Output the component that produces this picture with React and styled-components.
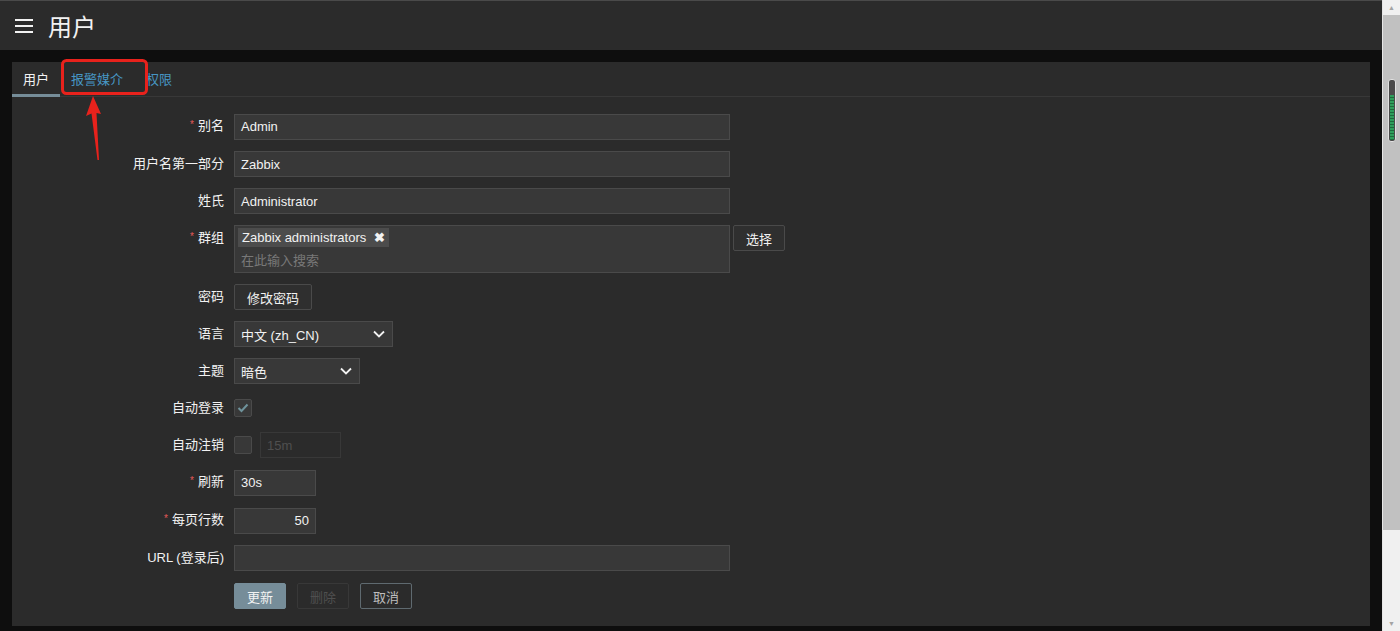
import styled, { createGlobalStyle } from "styled-components";

const GlobalStyle = createGlobalStyle`
    html, body {
        margin: 0;
        padding: 0;
        background: #0e0e0e;
        overflow: hidden;
    }
    body {
        font-family: "Liberation Sans", "Noto Sans CJK SC", sans-serif;
        font-size: 13px;
        color: #f2f2f2;
    }
`;

const Page = styled.div`
    display: flex;
    width: 1400px;
    height: 631px;
    position: relative;
`;

const Main = styled.div`
    flex: 1;
    display: flex;
    flex-direction: column;
    background: #0e0e0e;
`;

const Header = styled.header`
    height: 50px;
    box-sizing: border-box;
    border-top: 1px solid #4a4a4a;
    background: #2b2b2b;
    display: flex;
    align-items: center;
    gap: 15px;
    padding-left: 15px;
`;

const Burger = styled.div`
    display: flex;
    flex-direction: column;
    gap: 4px;
    span {
        display: block;
        width: 18px;
        height: 2px;
        background: #f2f2f2;
    }
`;

const Title = styled.h1`
    margin: 0;
    font-size: 24px;
    font-weight: normal;
    color: #f2f2f2;
    font-family: "Noto Sans CJK SC", sans-serif;
`;

const Panel = styled.section`
    flex: 1;
    margin: 12px 12px 5px 12px;
    background: #2b2b2b;
    display: flex;
    flex-direction: column;
`;

const TabBar = styled.nav`
    display: flex;
    height: 34px;
    border-bottom: 1px solid #383838;
`;

const Tab = styled.div`
    display: flex;
    align-items: center;
    padding: 0 11px;
    margin-right: ${(p) => p.$gap || 0}px;
    color: ${(p) => (p.$active ? "#f2f2f2" : "#4796c4")};
    border-bottom: 3px solid ${(p) => (p.$active ? "#768d99" : "transparent")};
    margin-bottom: -1px;
`;

const Form = styled.div`
    display: grid;
    grid-template-columns: 212px 1fr;
    column-gap: 10px;
    row-gap: 11px;
    padding-top: 16px;
`;

const Label = styled.label`
    align-self: start;
    line-height: 26px;
    text-align: right;
    white-space: nowrap;
`;

const Req = styled.span`
    color: #e45959;
    font-size: 10px;
    position: relative;
    top: -2px;
    margin-right: 4px;
`;

const Field = styled.div`
    display: flex;
    align-items: ${(p) => (p.$top ? "flex-start" : "center")};
    gap: ${(p) => p.$gap || 0}px;
    min-height: 26px;
`;

const TextBox = styled.div`
    box-sizing: border-box;
    width: ${(p) => p.$w}px;
    height: 26px;
    padding: 0 6px;
    display: flex;
    align-items: center;
    justify-content: ${(p) => (p.$right ? "flex-end" : "flex-start")};
    background: ${(p) => (p.$disabled ? "transparent" : "#383838")};
    border: 1px solid ${(p) => (p.$disabled ? "#383838" : "#4a4a4a")};
    color: ${(p) => (p.$disabled ? "#4f4f4f" : "#f2f2f2")};
`;

const Multi = styled.div`
    box-sizing: border-box;
    width: 496px;
    height: 48px;
    background: #383838;
    border: 1px solid #4a4a4a;
    padding: 2px 3px;
    display: flex;
    flex-direction: column;
    align-items: flex-start;
    gap: 3px;
`;

const Chip = styled.span`
    display: inline-flex;
    align-items: center;
    gap: 8px;
    height: 19px;
    padding: 0 4px;
    background: #4c4c4c;
    color: #f2f2f2;
    b {
        font-size: 13px;
    }
`;

const Placeholder = styled.span`
    color: #787878;
    padding-left: 3px;
    font-family: "Noto Sans CJK SC", sans-serif;
    font-size: 13px;
`;

const Button = styled.button`
    box-sizing: border-box;
    height: 26px;
    padding: 0 ${(p) => p.$pad || 12}px;
    font-family: inherit;
    font-size: 13px;
    border-radius: 2px;
    cursor: pointer;
    ${(p) =>
        p.$variant === "main"
            ? `background:#768d99;border:1px solid #768d99;color:#f2f2f2;`
            : p.$variant === "disabled"
            ? `background:transparent;border:1px solid #383838;color:#4f4f4f;`
            : p.$variant === "alt"
            ? `background:transparent;border:1px solid #5f6a70;color:#bdbdbd;`
            : `background:#2f2f2f;border:1px solid #4a4a4a;color:#f2f2f2;`}
`;

const Select = styled.div`
    box-sizing: border-box;
    width: ${(p) => p.$w}px;
    height: 26px;
    padding: 0 7px 0 6px;
    background: #383838;
    border: 1px solid #4a4a4a;
    display: flex;
    align-items: center;
    justify-content: space-between;
    color: #f2f2f2;
`;

const Check = styled.span`
    box-sizing: border-box;
    width: 18px;
    height: 18px;
    border-radius: 2px;
    background: #383838;
    border: 1px solid #4a4a4a;
    display: inline-flex;
    align-items: center;
    justify-content: center;
`;

const Actions = styled.div`
    display: flex;
    gap: 11px;
    margin-top: 1px;
`;

const Scrollbar = styled.div`
    width: 17px;
    border-left: 1px solid #e6e6e6;
    background: #f0f0f0;
    display: flex;
    flex-direction: column;
    align-items: stretch;
`;

const ScrollArrow = styled.div`
    height: 15px;
    display: flex;
    align-items: center;
    justify-content: center;
    color: #a3a3a3;
    font-size: 7px;
`;

const Thumb = styled.div`
    height: 515px;
    background: #c1c1c1;
    display: flex;
    flex-direction: column;
    align-items: center;
    padding-top: 64px;
    box-sizing: border-box;
`;

const Meter = styled.div`
    width: 8px;
    height: 63px;
    box-sizing: border-box;
    border: 1px solid #e0e0e0;
    border-radius: 3px;
    background: #4a4a4a;
    display: flex;
    flex-direction: column;
    justify-content: flex-end;
    padding: 1px;
    span {
        height: 45px;
        background: repeating-linear-gradient(
            to bottom,
            #2e9e5b 0px,
            #2e9e5b 2px,
            #1c6b3c 2px,
            #1c6b3c 3px
        );
    }
`;

const Spacer = styled.div`
    flex: 1;
`;

const Annotation = styled.svg`
    position: absolute;
    left: 0;
    top: 0;
    pointer-events: none;
`;

const Chevron = () => (
    <svg width="12" height="8" viewBox="0 0 12 8">
        <path d="M1 1.5 L6 6.5 L11 1.5" fill="none" stroke="#f2f2f2" strokeWidth="1.8" />
    </svg>
);

const Row = ({ label, required, children }) => (
    <>
        <Label>
            {required && <Req>*</Req>}
            {label}
        </Label>
        {children}
    </>
);

export default function App() {
    return (
        <>
            <GlobalStyle />
            <Page>
                <Main>
                    <Header>
                        <Burger>
                            <span />
                            <span />
                            <span />
                        </Burger>
                        <Title>用户</Title>
                    </Header>
                    <Panel>
                        <TabBar>
                            <Tab $active>用户</Tab>
                            <Tab $gap={1}>报警媒介</Tab>
                            <Tab>权限</Tab>
                        </TabBar>
                        <Form>
                            <Row label="别名" required>
                                <Field><TextBox $w={496}>Admin</TextBox></Field>
                            </Row>
                            <Row label="用户名第一部分">
                                <Field><TextBox $w={496}>Zabbix</TextBox></Field>
                            </Row>
                            <Row label="姓氏">
                                <Field><TextBox $w={496}>Administrator</TextBox></Field>
                            </Row>
                            <Row label="群组" required>
                                <Field $top $gap={3}>
                                    <Multi>
                                        <Chip>
                                            Zabbix administrators <b>✖</b>
                                        </Chip>
                                        <Placeholder>在此输入搜索</Placeholder>
                                    </Multi>
                                    <Button $pad={12}>选择</Button>
                                </Field>
                            </Row>
                            <Row label="密码">
                                <Field><Button>修改密码</Button></Field>
                            </Row>
                            <Row label="语言">
                                <Field>
                                    <Select $w={159}>
                                        中文 (zh_CN)
                                        <Chevron />
                                    </Select>
                                </Field>
                            </Row>
                            <Row label="主题">
                                <Field>
                                    <Select $w={126}>
                                        暗色
                                        <Chevron />
                                    </Select>
                                </Field>
                            </Row>
                            <Row label="自动登录">
                                <Field>
                                    <Check>
                                        <svg width="12" height="10" viewBox="0 0 12 10">
                                            <path d="M1.5 5 L4.5 8 L10.5 1.5" fill="none" stroke="#6f939c" strokeWidth="2" />
                                        </svg>
                                    </Check>
                                </Field>
                            </Row>
                            <Row label="自动注销">
                                <Field $gap={8}>
                                    <Check />
                                    <TextBox $w={81} $disabled>15m</TextBox>
                                </Field>
                            </Row>
                            <Row label="刷新" required>
                                <Field><TextBox $w={82}>30s</TextBox></Field>
                            </Row>
                            <Row label="每页行数" required>
                                <Field><TextBox $w={82} $right>50</TextBox></Field>
                            </Row>
                            <Row label="URL (登录后)">
                                <Field><TextBox $w={496} /></Field>
                            </Row>
                            <span />
                            <Actions>
                                <Button $variant="main">更新</Button>
                                <Button $variant="disabled">删除</Button>
                                <Button $variant="alt">取消</Button>
                            </Actions>
                        </Form>
                    </Panel>
                </Main>
                <Scrollbar>
                    <ScrollArrow>▲</ScrollArrow>
                    <Thumb>
                        <Meter>
                            <span />
                        </Meter>
                    </Thumb>
                    <Spacer />
                    <ScrollArrow>▼</ScrollArrow>
                </Scrollbar>
                <Annotation width="160" height="170" viewBox="0 0 160 170">
                    <rect x="62.5" y="60.5" width="84" height="33" rx="4" fill="none" stroke="#e8221c" strokeWidth="3" />
                    <polygon points="93,96 101,114 96.5,113 99,160 97.5,160 91.5,113.5 86,116" fill="#e8221c" />
                </Annotation>
            </Page>
        </>
    );
}
